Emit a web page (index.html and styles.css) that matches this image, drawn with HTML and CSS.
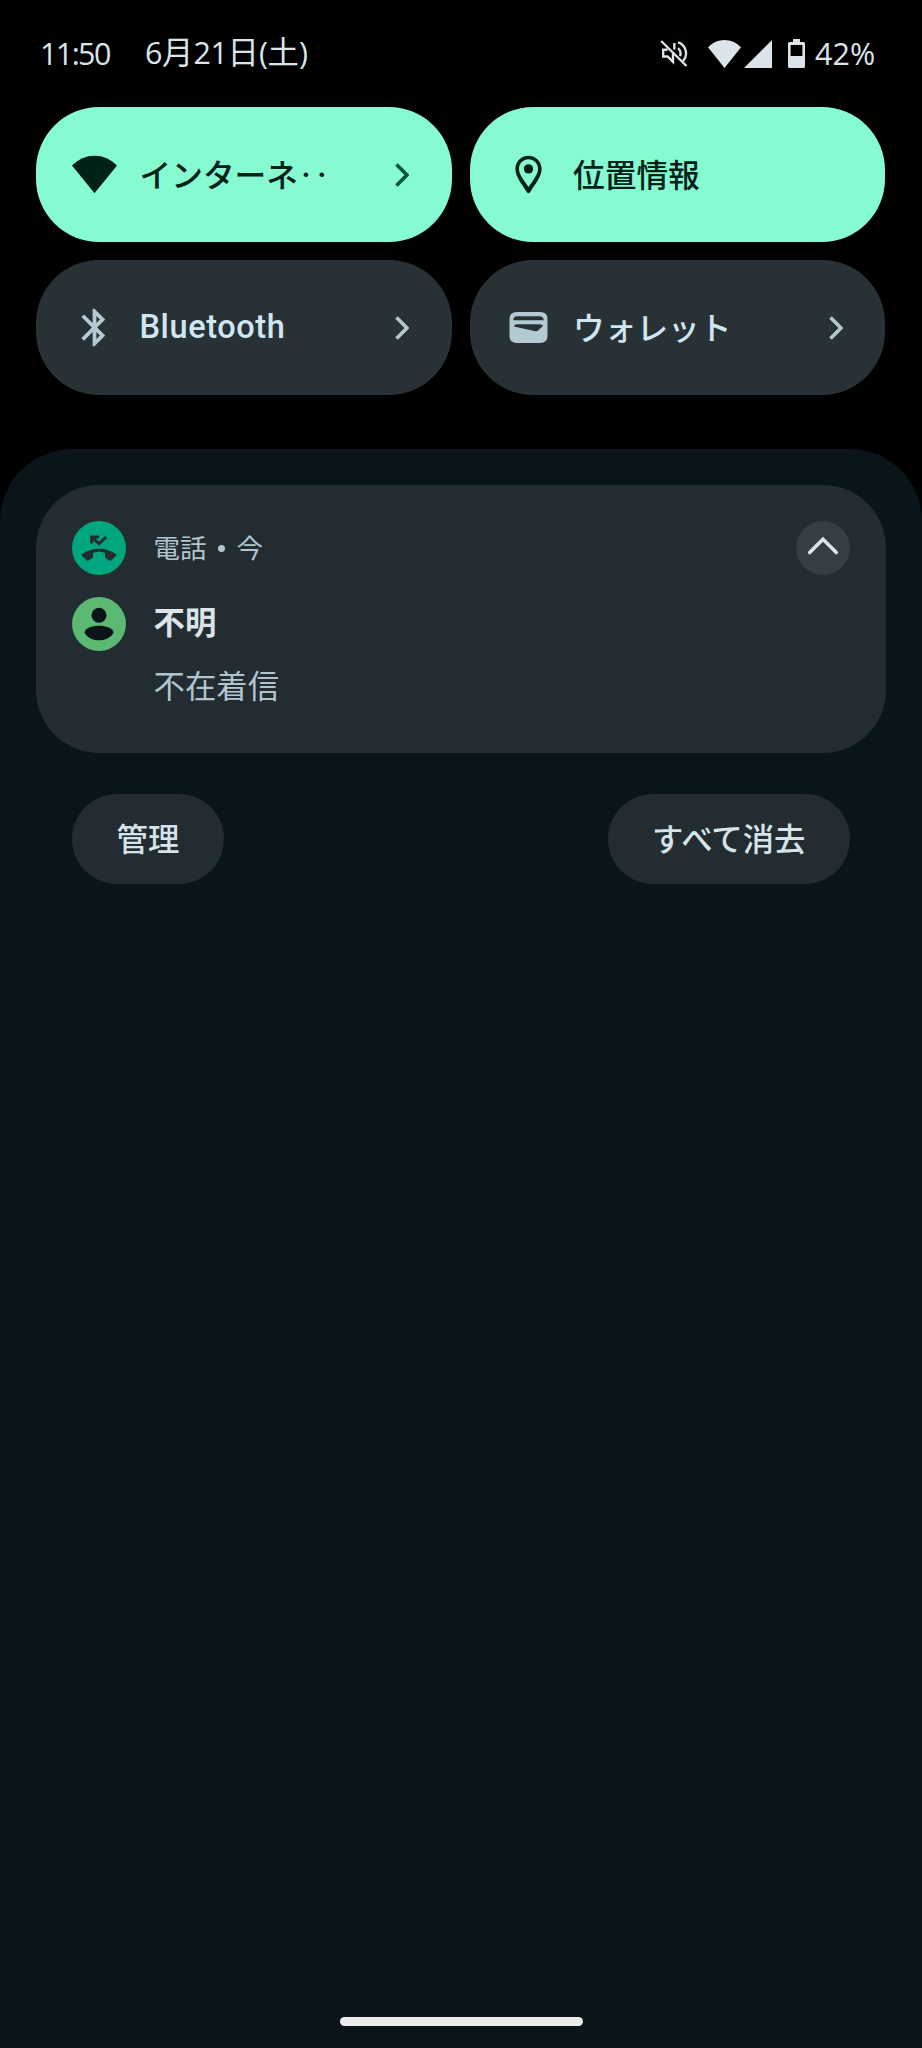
FILE: index.html
```html
<!DOCTYPE html>
<html lang="ja">
<head>
<meta charset="utf-8">
<title>通知</title>
<link rel="stylesheet" href="styles.css">
</head>
<body>
<header class="status">
  <span class="clock">11:50</span>
  <span class="date"><span class="num">6</span>月<span class="num">21</span>日<span class="num">(</span>土<span class="num">)</span></span>
  <div class="system">
    <svg class="mute" viewBox="24 22 82 80"><path d="M27 25L102 99M77 29A34 34 0 0 1 92 84M46 51H33V71H46L62 87V62M66 31V50M77 46Q88 55 83 70"/></svg>
    <svg class="signal-wifi" viewBox="0 0 33 28"><path d="M0 7.300Q7 0 16.500 0T33 7.300L16.500 28z"/></svg>
    <svg class="signal-cell" viewBox="0 0 28 28"><path d="M28 0V28H0z"/></svg>
    <svg class="battery" viewBox="0 0 17 29"><path fill-rule="evenodd" d="M5 0h7v3h3.500Q17 3 17 4.500v23Q17 29 15.500 29h-14Q0 29 0 27.500v-23Q0 3 1.500 3H5zM2.600 6v11h11.800V6z"/></svg>
    <span class="percent">42%</span>
  </div>
</header>

<section class="tiles">
  <div class="tile tile-on">
    <svg class="tile-icon" viewBox="0 0 45 45"><path d="M0 13.500Q9.500 3.800 22.500 3.800T45 13.500L22.500 41.200z"/></svg>
    <span class="tile-label">インターネ‥</span>
    <svg class="chevron" viewBox="0 0 14 24"><path d="M1.500 1.500L12 12 1.500 22.500"/></svg>
  </div>
  <div class="tile tile-on">
    <svg class="tile-icon" viewBox="0 0 24 24"><path d="M12 2C8.130 2 5 5.130 5 9c0 4.600 4.700 9.700 6 12.200Q12 22.800 13 21.200C14.300 18.700 19 13.600 19 9c0-3.870-3.130-7-7-7zM6.900 9c0-2.820 2.280-5.100 5.100-5.100s5.100 2.280 5.100 5.100c0 3-3 6.400-5.100 9.600C9.900 15.400 6.900 12 6.900 9z"/><circle cx="12" cy="9" r="2.500"/></svg>
    <span class="tile-label">位置情報</span>
  </div>
  <div class="tile">
    <svg class="tile-icon" viewBox="0 0 24 24"><path d="M17.710 7.710L12 2h-1v7.590L6.410 5 5 6.410 10.590 12 5 17.590 6.410 19 11 14.410V22h1l5.710-5.710-4.300-4.290 4.300-4.290zM13 5.830l1.880 1.880L13 9.590V5.830zm1.880 10.460L13 18.170v-3.760l1.880 1.880z"/></svg>
    <span class="tile-label latin">Bluetooth</span>
    <svg class="chevron" viewBox="0 0 14 24"><path d="M1.500 1.500L12 12 1.500 22.500"/></svg>
  </div>
  <div class="tile">
    <svg class="tile-icon" viewBox="0 0 45 45"><path fill-rule="evenodd" d="M11 7h23q7.500 0 7.500 7v17q0 7-7.500 7H11q-7.500 0-7.500-7V14q0-7 7.500-7zM7.200 15.300h30.600Q37.300 11.300 33.500 11.300h-22.500Q7.600 11.300 7.200 15.300zM11 19.200Q8.500 19.200 7.800 21.400L29.500 26.300Q31 26.600 32 25.500L37.200 20.700Q35.500 19.200 34 19.200z"/></svg>
    <span class="tile-label">ウォレット</span>
    <svg class="chevron" viewBox="0 0 14 24"><path d="M1.500 1.500L12 12 1.500 22.500"/></svg>
  </div>
</section>

<main class="shade">
  <article class="card">
    <svg class="badge" viewBox="0 0 54 54"><circle class="call-bg" cx="27" cy="27" r="27"/><path class="call-arrow" d="M27 16.100H19.700V22.500M19.700 16.100L27 22.700 34.200 16"/><path class="call-handset" d="M10 33.200Q17.500 27.700 27 27.700T44 33.200Q44.800 34 44 34.800L39.300 39.400Q38.500 40.100 37.600 39.400L34 37.300Q33 36.700 33 35.800V31.700Q27 30 21 31.700V35.800Q21 36.700 20 37.300L16.400 39.400Q15.500 40.100 14.700 39.400L10 34.800Q9.200 34 10 33.200z"/></svg>
    <span class="app">電話<i class="dot"></i>今</span>
    <svg class="collapse" viewBox="0 0 54 54"><circle class="collapse-bg" cx="27" cy="27" r="27"/><path class="collapse-mark" d="M13.700 31.500L27 18.200 40.300 31.500"/></svg>
    <svg class="badge" viewBox="0 0 54 54"><circle class="avatar-bg" cx="27" cy="27" r="27"/><circle class="avatar-ink" cx="27" cy="18.200" r="7.500"/><path class="avatar-ink" d="M12.700 35.500C12.700 31 20 28.700 27 28.700S41.400 31 41.400 35.500C40 39.500 34 43.300 27 43.300S14 39.500 12.700 35.500z"/></svg>
    <span class="caller">不明</span>
    <span class="message">不在着信</span>
  </article>
  <div class="actions">
    <button class="pill">管理</button>
    <button class="pill">すべて消去</button>
  </div>
  <div class="home-bar"></div>
</main>
</body>
</html>
```
FILE: styles.css
```css
* { box-sizing: border-box; }

body {
  margin: 0;
  width: 922px;
  height: 2048px;
  display: flex;
  flex-direction: column;
  overflow: hidden;
  background: #000;
  color: #dbe4e9;
  font-family: "Noto Sans CJK JP", sans-serif;
  font-size: 31.400px;
  line-height: 1;
}

svg { display: block; flex: none; fill: currentColor; }

.status {
  height: 107px;
  padding: 0 46px 0 40px;
  display: flex;
  align-items: center;
}
.clock, .num, .percent {
  font-family: "Open Sans", "Noto Sans", sans-serif;
  font-size: 30.500px;
}
.clock, .percent { padding-bottom: 1px; }
.clock { letter-spacing: -1.600px; width: 105px; }
.date { white-space: nowrap; padding-bottom: 4px; }
.date .num { letter-spacing: -0.400px; }
.system { margin-left: auto; display: flex; align-items: center; }
.mute {
  width: 28px;
  height: 27px;
  margin-right: 20px;
  fill: none;
  stroke: currentColor;
  stroke-width: 7;
}
.signal-wifi { width: 33px; height: 28px; margin-right: 3px; }
.signal-cell { width: 28px; height: 28px; margin-right: 16px; }
.battery { width: 17px; height: 29px; margin-right: 10px; }
.percent { width: 61px; }

.tiles {
  padding: 0 37px 0 36px;
  display: grid;
  grid-template-columns: 1fr 1fr;
  grid-auto-rows: 135px;
  gap: 18px;
}
.tile {
  display: flex;
  align-items: center;
  padding: 0 42.500px 0 36px;
  border-radius: 63px;
  background: #283236;
  color: #b4cad3;
}
.tile-icon { width: 45px; height: 45px; margin-right: 22.500px; }
.tile-label { flex: 1; padding-bottom: 2px; white-space: nowrap; font-size: 31.700px; font-weight: 500; color: #d0e6f0; }
.latin { padding-bottom: 0; font-family: Roboto, sans-serif; font-size: 32.500px; letter-spacing: 0.600px; }
.chevron {
  width: 14px;
  height: 24px;
  fill: none;
  stroke: currentColor;
  stroke-width: 3.600;
}
.tile-on { background: #86fad0; color: #002117; }
.tile-on .tile-label { color: #002117; }
.tile-on .chevron { color: #00513b; }

.shade {
  flex: 1;
  margin-top: 54px;
  padding: 36px 36px 22px;
  display: flex;
  flex-direction: column;
  border-radius: 72px 72px 0 0;
  background: #0a151a;
}
.card {
  height: 268px;
  padding: 35.500px 36px 0;
  display: grid;
  grid-template-columns: 54px 1fr 54px;
  grid-template-rows: 54px 54px 46px;
  column-gap: 27.500px;
  row-gap: 22px;
  align-items: center;
  align-content: start;
  border-radius: 63px;
  background: #222c31;
}
.badge, .collapse { width: 54px; height: 54px; }
.app { display: flex; align-items: center; font-size: 26.500px; color: #b0c5ce; }
.dot { width: 7px; height: 7px; margin: 2px 11.500px 0; border-radius: 50%; background: currentColor; }
.caller { grid-column: 2; padding-bottom: 6px; font-weight: 600; color: #dbe4e9; }
.message { grid-column: 2; align-self: start; margin-top: -4px; color: #b0c5ce; }
.call-bg { fill: #00a67d; }
.call-handset { fill: #222c31; }
.call-arrow { fill: none; stroke: #222c31; stroke-width: 3; }
.collapse-bg { fill: #343e43; }
.collapse-mark { fill: none; stroke: #dbe4e9; stroke-width: 3.600; stroke-linecap: round; }
.avatar-bg { fill: #5bb974; }
.avatar-ink { fill: #0a151a; }

.actions {
  margin-top: 40.500px;
  padding: 0 36px;
  display: flex;
  justify-content: space-between;
}
.pill {
  height: 90.500px;
  padding: 0 44.500px 2px;
  border: 0;
  border-radius: 46px;
  background: #222c31;
  color: #d5e3ea;
  font: inherit;
  font-weight: 500;
}

.home-bar {
  width: 243px;
  height: 9px;
  margin: auto auto 0;
  border-radius: 5px;
  background: #ececec;
}
```
